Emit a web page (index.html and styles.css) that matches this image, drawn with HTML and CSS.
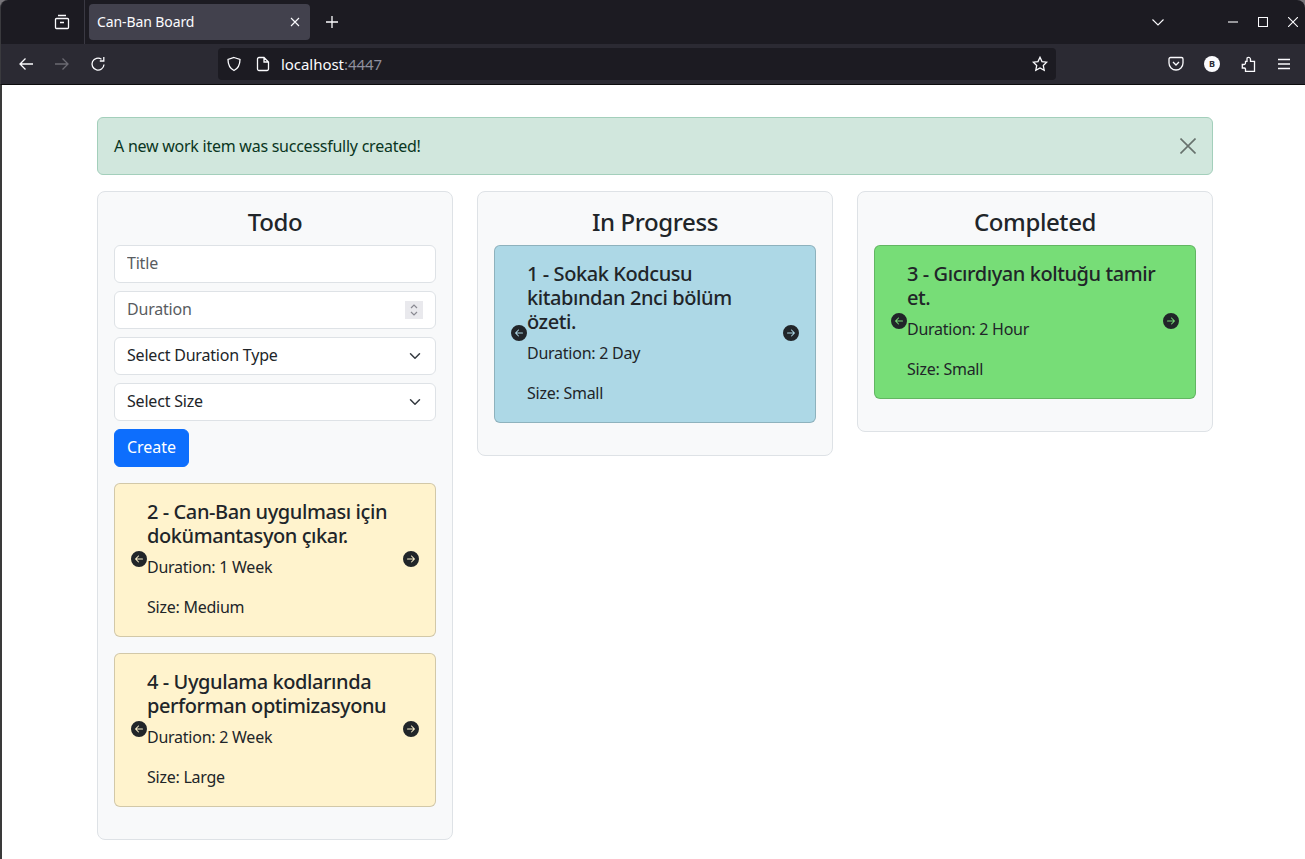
FILE: index.html

```html
<!DOCTYPE html>
<html lang="en">
<head>
    <meta charset="UTF-8">
    <title>Can-Ban Board</title>
    <link rel="stylesheet" href="styles.css">
</head>
<body>
    <div class="browser">
        <div class="tabbar">
            <svg class="icon view-icon" viewBox="0 0 16 16"><path d="M4 1.500h8M2.500 4.500h11a1 1 0 0 1 1 1v8a1 1 0 0 1-1 1h-11a1 1 0 0 1-1-1v-8a1 1 0 0 1 1-1zM6 8.500h4"/></svg>
            <span class="tab-sep"></span>
            <div class="tab">
                <span class="tab-title">Can-Ban Board</span>
                <svg class="tab-close" viewBox="0 0 10 10"><path d="M1 1l8 8M9 1l-8 8"/></svg>
            </div>
            <svg class="icon new-tab" viewBox="0 0 12 12"><path d="M6 0v12M0 6h12"/></svg>
            <div class="window-controls">
                <svg class="tab-list" viewBox="0 0 12 7"><path d="M.5.5L6 6 11.500.5"/></svg>
                <svg class="win-btn" viewBox="0 0 10 10"><path d="M0 5h10"/></svg>
                <svg class="win-btn" viewBox="0 0 10 10"><path d="M.5.5h9v9h-9z"/></svg>
                <svg class="win-btn" viewBox="0 0 10 10"><path d="M0 0l10 10M10 0L0 10"/></svg>
            </div>
        </div>
        <div class="toolbar">
            <svg class="icon nav-icon" viewBox="0 0 16 16"><path d="M15 8H2M7.500 2.500L2 8l5.500 5.500"/></svg>
            <svg class="icon nav-icon disabled" viewBox="0 0 16 16"><path d="M1 8h13M8.500 2.500L14 8l-5.500 5.500"/></svg>
            <svg class="icon nav-icon" viewBox="0 0 16 16"><path d="M14 8.500A6 6 0 1 1 11.500 3.200M13.800 1v4h-4"/></svg>
            <div class="urlbar">
                <svg class="icon shield" viewBox="0 0 16 16"><path d="M8 1.500l6 2c0 5-1 8.500-6 11-5-2.500-6-6-6-11z"/></svg>
                <svg class="icon file-icon" viewBox="0 0 14 16"><path d="M3 1.500h5l4.500 4.500v7a1.500 1.500 0 0 1-1.500 1.500H3A1.500 1.500 0 0 1 1.500 13V3A1.500 1.500 0 0 1 3 1.500zM8 1.500V6h4.500"/></svg>
                <span class="url">localhost<span class="url-port">:4447</span></span>
                <svg class="icon star" viewBox="0 0 16 16"><path d="M8 1.300l2 4.300 4.700.6-3.400 3.300.9 4.700L8 11.900l-4.200 2.300.9-4.700L1.300 6.200 6 5.600z"/></svg>
            </div>
            <div class="toolbar-right">
                <svg class="icon" viewBox="0 0 16 16"><path d="M2.500 1.500h11A1.500 1.500 0 0 1 15 3v4a7 7 0 0 1-14 0V3a1.500 1.500 0 0 1 1.500-1.500zM5 6l3 3 3-3"/></svg>
                <span class="profile">B</span>
                <svg class="icon" viewBox="0 0 16 16"><path d="M7.200 1.800a2 2 0 0 1 3.300 1.500v2h4v10H5.500v-2.300a1.500 1.500 0 0 0-1.500-1H2.300V8.500H4A1.500 1.500 0 0 0 5.500 7V5.300H7V3.300c0-.6 0-1 .2-1.500z"/></svg>
                <svg class="icon" viewBox="0 0 16 16"><path d="M2 3.500h12M2 8h12M2 12.500h12"/></svg>
            </div>
        </div>
    </div>

    <div class="page">
        <div class="board">
            <div class="alert">
                <span>A new work item was successfully created!</span>
                <svg class="alert-close" viewBox="0 0 16 16"><path d="M.5.5l15 15M15.500.5l-15 15"/></svg>
            </div>

            <div class="columns">
                <div class="column">
                    <h3>Todo</h3>
                    <form class="new-item">
                        <input class="field" type="text" placeholder="Title">
                        <div class="field">
                            <span class="label placeholder">Duration</span>
                            <span class="spinner">
                                <svg viewBox="0 0 10 14"><path d="M2 5l3-3 3 3M2 9l3 3 3-3"/></svg>
                            </span>
                        </div>
                        <div class="field">
                            <span class="label">Select Duration Type</span>
                            <svg class="chevron" viewBox="0 0 16 16"><path d="M2 5l6 6 6-6"/></svg>
                        </div>
                        <div class="field">
                            <span class="label">Select Size</span>
                            <svg class="chevron" viewBox="0 0 16 16"><path d="M2 5l6 6 6-6"/></svg>
                        </div>
                        <button class="create" type="button">Create</button>
                    </form>

                    <div class="work-item todo">
                        <svg class="arrow" viewBox="0 0 16 16"><path d="M8 0a8 8 0 1 0 0 16A8 8 0 0 0 8 0zm3.500 7.500a.5.5 0 0 1 0 1H5.700l2.150 2.150a.5.5 0 0 1-.7.7l-3-3a.5.5 0 0 1 0-.7l3-3a.5.5 0 1 1 .7.7L5.700 7.500h5.800z"/></svg>
                        <div class="item-body">
                            <h5>2 - Can-Ban uygulması için dokümantasyon çıkar.</h5>
                            <p class="duration">Duration: 1 Week</p>
                            <p>Size: Medium</p>
                        </div>
                        <svg class="arrow" viewBox="0 0 16 16"><path d="M8 0a8 8 0 1 1 0 16A8 8 0 0 1 8 0zM4.500 7.500a.5.5 0 0 0 0 1h5.800L8.150 10.650a.5.5 0 0 0 .7.7l3-3a.5.5 0 0 0 0-.7l-3-3a.5.5 0 1 0-.7.7l2.150 2.150H4.500z"/></svg>
                    </div>

                    <div class="work-item todo">
                        <svg class="arrow" viewBox="0 0 16 16"><path d="M8 0a8 8 0 1 0 0 16A8 8 0 0 0 8 0zm3.500 7.500a.5.5 0 0 1 0 1H5.700l2.150 2.150a.5.5 0 0 1-.7.7l-3-3a.5.5 0 0 1 0-.7l3-3a.5.5 0 1 1 .7.7L5.700 7.500h5.800z"/></svg>
                        <div class="item-body">
                            <h5>4 - Uygulama kodlarında performan optimizasyonu</h5>
                            <p class="duration">Duration: 2 Week</p>
                            <p>Size: Large</p>
                        </div>
                        <svg class="arrow" viewBox="0 0 16 16"><path d="M8 0a8 8 0 1 1 0 16A8 8 0 0 1 8 0zM4.500 7.500a.5.5 0 0 0 0 1h5.800L8.150 10.650a.5.5 0 0 0 .7.7l3-3a.5.5 0 0 0 0-.7l-3-3a.5.5 0 1 0-.7.7l2.150 2.150H4.500z"/></svg>
                    </div>
                </div>

                <div class="column">
                    <h3>In Progress</h3>
                    <div class="work-item in-progress">
                        <svg class="arrow" viewBox="0 0 16 16"><path d="M8 0a8 8 0 1 0 0 16A8 8 0 0 0 8 0zm3.500 7.500a.5.5 0 0 1 0 1H5.700l2.150 2.150a.5.5 0 0 1-.7.7l-3-3a.5.5 0 0 1 0-.7l3-3a.5.5 0 1 1 .7.7L5.700 7.500h5.800z"/></svg>
                        <div class="item-body">
                            <h5>1 - Sokak Kodcusu kitabından 2nci bölüm özeti.</h5>
                            <p class="duration">Duration: 2 Day</p>
                            <p>Size: Small</p>
                        </div>
                        <svg class="arrow" viewBox="0 0 16 16"><path d="M8 0a8 8 0 1 1 0 16A8 8 0 0 1 8 0zM4.500 7.500a.5.5 0 0 0 0 1h5.800L8.150 10.650a.5.5 0 0 0 .7.7l3-3a.5.5 0 0 0 0-.7l-3-3a.5.5 0 1 0-.7.7l2.150 2.150H4.500z"/></svg>
                    </div>
                </div>

                <div class="column">
                    <h3>Completed</h3>
                    <div class="work-item done">
                        <svg class="arrow" viewBox="0 0 16 16"><path d="M8 0a8 8 0 1 0 0 16A8 8 0 0 0 8 0zm3.500 7.500a.5.5 0 0 1 0 1H5.700l2.150 2.150a.5.5 0 0 1-.7.7l-3-3a.5.5 0 0 1 0-.7l3-3a.5.5 0 1 1 .7.7L5.700 7.500h5.800z"/></svg>
                        <div class="item-body">
                            <h5>3 - Gıcırdıyan koltuğu tamir et.</h5>
                            <p class="duration">Duration: 2 Hour</p>
                            <p>Size: Small</p>
                        </div>
                        <svg class="arrow" viewBox="0 0 16 16"><path d="M8 0a8 8 0 1 1 0 16A8 8 0 0 1 8 0zM4.500 7.500a.5.5 0 0 0 0 1h5.800L8.150 10.650a.5.5 0 0 0 .7.7l3-3a.5.5 0 0 0 0-.7l-3-3a.5.5 0 1 0-.7.7l2.150 2.150H4.500z"/></svg>
                    </div>
                </div>
            </div>
        </div>
    </div>
</body>
</html>
```

FILE: styles.css

```css
* {
    box-sizing: border-box;
}

body {
    margin: 0;
    height: 100vh;
    overflow: hidden;
    display: flex;
    flex-direction: column;
    font-family: "Noto Sans", sans-serif;
    font-size: 16px;
    line-height: 24px;
    letter-spacing: -0.25px;
    color: #212529;
    background-color: #77757a;
}

/* browser chrome */
.browser {
    height: 85px;
    flex: none;
    background-color: #1c1b22;
    border-bottom: 1px solid #0c0c0d;
    border-left: 1px solid #3a3a3e;
    border-radius: 8px 8px 0 0;
    overflow: hidden;
}

.icon {
    width: 16px;
    height: 16px;
    flex: none;
    fill: none;
    stroke: #fbfbfe;
    stroke-width: 1.3;
}

.tabbar {
    height: 44px;
    display: flex;
    align-items: center;
    padding-left: 53px;
}

.tab-sep {
    width: 1px;
    height: 44px;
    margin-left: 14px;
    background-color: #3a3943;
}

.tab {
    width: 221px;
    height: 36px;
    margin-left: 4px;
    padding: 0 10px 0 8px;
    display: flex;
    align-items: center;
    justify-content: space-between;
    background-color: #42414d;
    border-radius: 4px;
    color: #fbfbfe;
    font-size: 14px;
    letter-spacing: -0.1px;
}

.tab-close {
    width: 10px;
    height: 10px;
    fill: none;
    stroke: #fbfbfe;
    stroke-width: 1.1;
}

.new-tab {
    width: 12px;
    height: 12px;
    margin-left: 16px;
}

.window-controls {
    margin-left: auto;
    padding-right: 7px;
    display: flex;
    align-items: center;
    gap: 20px;
}

.window-controls svg {
    fill: none;
    stroke: #fbfbfe;
    stroke-width: 1.1;
}

.tab-list {
    width: 12px;
    height: 7px;
    margin-right: 44px;
}

.win-btn {
    width: 10px;
    height: 10px;
}

.toolbar {
    height: 40px;
    display: flex;
    align-items: center;
    padding-left: 17px;
    background-color: #2b2a33;
}

.nav-icon {
    margin-right: 20px;
}

.nav-icon.disabled {
    stroke: #6b6a72;
}

.urlbar {
    width: 838px;
    height: 32px;
    margin-left: 92px;
    padding: 0 8px;
    display: flex;
    align-items: center;
    background-color: #1c1b22;
    border-radius: 4px;
    color: #fbfbfe;
    font-size: 15px;
    letter-spacing: -0.05px;
}

.shield {
    margin-right: 14px;
}

.file-icon {
    width: 14px;
    margin-right: 11px;
}

.url-port {
    color: #8f8f9d;
}

.star {
    margin-left: auto;
}

.toolbar-right {
    margin-left: auto;
    padding-right: 13px;
    display: flex;
    align-items: center;
    gap: 20px;
}

.profile {
    width: 16px;
    height: 16px;
    border-radius: 50%;
    background-color: #fbfbfe;
    color: #2b2a33;
    font-size: 9px;
    font-weight: 700;
    line-height: 16px;
    letter-spacing: 0;
    text-align: center;
}

/* page */
.page {
    flex: 1;
    padding: 32px 0 0 95px;
    background-color: #fff;
    border-left: 2px solid #3a3a3a;
}

.board {
    width: 1116px;
}

.alert {
    height: 58px;
    padding: 0 16px;
    margin-bottom: 16px;
    display: flex;
    align-items: center;
    justify-content: space-between;
    color: #0a3622;
    background-color: #d1e7dd;
    border: 1px solid #a3cfbb;
    border-radius: 6px;
}

.alert-close {
    width: 16px;
    height: 16px;
    fill: none;
    stroke: #000;
    stroke-width: 1.6;
    opacity: 0.5;
}

.columns {
    display: grid;
    grid-template-columns: repeat(3, 1fr);
    gap: 24px;
    align-items: start;
}

.column {
    padding: 14px 16px 32px;
    background-color: #f8f9fa;
    border: 1px solid #dee2e6;
    border-radius: 8px;
}

h3 {
    margin: 0 0 7px;
    font-size: 24px;
    font-weight: 500;
    line-height: 32px;
    letter-spacing: -0.4px;
    text-align: center;
}

.new-item {
    display: flex;
    flex-direction: column;
    align-items: flex-start;
    gap: 8px;
    margin-bottom: 16px;
}

.field {
    width: 100%;
    height: 38px;
    padding: 0 12px;
    display: flex;
    align-items: center;
    justify-content: space-between;
    background-color: #fff;
    border: 1px solid #dee2e6;
    border-radius: 6px;
    font-family: inherit;
    font-size: 16px;
    letter-spacing: -0.2px;
    color: #212529;
}

input.field {
    padding-bottom: 2px;
}

.label {
    margin-bottom: 2px;
}

.field::placeholder,
.placeholder {
    color: #595c5f;
    opacity: 1;
}

.spinner {
    width: 18px;
    height: 18px;
    background-color: #e9e9ed;
    display: flex;
    align-items: center;
    justify-content: center;
}

.spinner svg {
    width: 10px;
    height: 14px;
    fill: none;
    stroke: #8a8a92;
    stroke-width: 1.2;
}

.chevron {
    width: 16px;
    height: 12px;
    fill: none;
    stroke: #343a40;
    stroke-width: 2;
    stroke-linecap: round;
    stroke-linejoin: round;
}

.create {
    height: 38px;
    width: 75px;
    padding: 0 0 2px;
    background-color: #0d6efd;
    color: #fff;
    border: 1px solid #0d6efd;
    border-radius: 6px;
    font-family: inherit;
    font-size: 16px;
    letter-spacing: 0;
}

.work-item {
    padding: 16px;
    display: flex;
    align-items: center;
    border: 1px solid rgba(0, 0, 0, 0.175);
    border-radius: 6px;
}

.work-item + .work-item {
    margin-top: 16px;
}

.todo {
    background-color: #fff3cd;
}

.in-progress {
    background-color: #add8e6;
}

.done {
    background-color: #77dd77;
}

.arrow {
    width: 16px;
    height: 16px;
    flex: none;
    margin-top: -2px;
    fill: #212529;
}

.arrow path {
    fill-rule: evenodd;
}

.item-body {
    flex: 1;
    min-width: 0;
}

h5 {
    margin: 0 0 7px;
    font-size: 20px;
    font-weight: 500;
    line-height: 24px;
    letter-spacing: -0.42px;
}

.item-body p {
    margin: 0;
}

.item-body .duration {
    margin-bottom: 16px;
}

.item-body p:last-child {
    margin-bottom: 1px;
}
```
